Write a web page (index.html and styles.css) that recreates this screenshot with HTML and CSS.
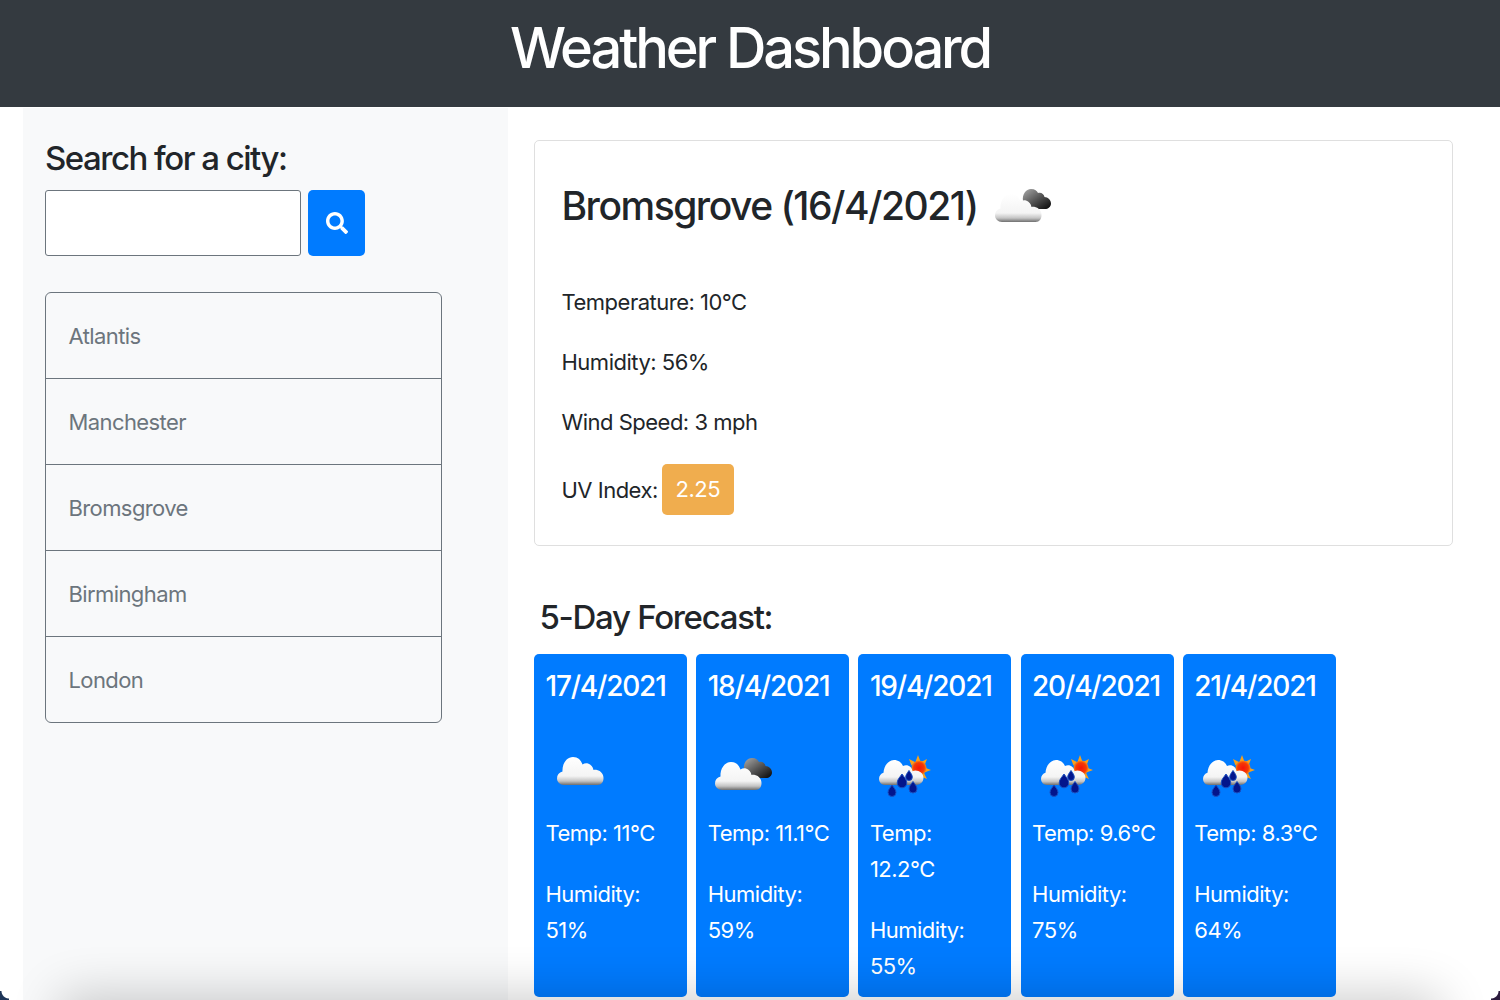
FILE: index.html
```html
<!DOCTYPE html>
<html lang="en">
<head>
    <meta charset="UTF-8">
    <meta name="viewport" content="width=device-width, initial-scale=1.0">
    <title>Weather Dashboard</title>
    <link rel="stylesheet" href="styles.css">
</head>
<body>
    <svg class="defs" width="0" height="0">
        <defs>
            <linearGradient id="white" x1="0" y1="0" x2="0" y2="1">
                <stop offset="0" stop-color="#fff"/>
                <stop offset="0.68" stop-color="#f4f4f4"/>
                <stop offset="0.86" stop-color="#c4c4c4"/>
                <stop offset="1" stop-color="#6f6f6f"/>
            </linearGradient>
            <linearGradient id="dark" x1="0" y1="0" x2="1" y2="1">
                <stop offset="0" stop-color="#aaa"/>
                <stop offset="0.5" stop-color="#555"/>
                <stop offset="1" stop-color="#050505"/>
            </linearGradient>
            <radialGradient id="sun">
                <stop offset="0" stop-color="#f4140a"/>
                <stop offset="0.7" stop-color="#f53a05"/>
                <stop offset="1" stop-color="#f98c1a"/>
            </radialGradient>
            <symbol id="cloud-white" viewBox="0 0 47 28">
                <path fill="url(#white)" d="M7 28C3 28 0 25 0 21.500 0 18 2 15.500 5.500 14.500 5 7 9.500 0 16 0c5 0 8 3 9.500 7.500 1.500-1 3.500-1.500 5.500-1 3 1 5 3.500 5.500 6.500 1-.5 2.500-.5 3.500 0 4 1 6.500 4 6.500 8 0 4-2 7-6 7z"/>
            </symbol>
            <symbol id="cloud-dark" viewBox="0 0 30 20">
                <path fill="url(#dark)" d="M2 12C1 5 5 0 10 0c4 0 6 2 7 4 3-1 6 1 6.500 4 3.500 0 6.500 3 6.500 6.500S27 20 24 20H10z"/>
            </symbol>
            <symbol id="rain-sun" viewBox="0 0 52 42">
                <g fill="#f9a11b">
                    <path d="M39 0l2.200 6h-4.400zM30 4l6 3-3.500 3.500zM48 4l-2.500 6.500-3.500-3.500zM52 15l-6 2.200v-4.400zM48 24l-6-2.500 3-3.500z"/>
                </g>
                <circle cx="40" cy="13" r="7.500" fill="url(#sun)"/>
                <path fill="url(#white)" d="M6 30c-3.300 0-6-2.700-6-6.200 0-3 2-5.300 4.500-6C5 10.500 9.500 5 15 5c4 0 7.500 2.300 9 6 1-.5 2-.7 3-.7 3.500 0 6 2.500 6.500 6 1-.5 2-.8 3-.8 4 0 8 3 8 7.300S41 30 37 30z"/>
                <g fill="#03158c" stroke="#1a4fc0" stroke-width="1">
                    <path d="M30 15.500c1.700 2.600 3.300 4.200 3.300 6.700a3.300 3.300 0 0 1-6.600 0c0-2.500 1.600-4.100 3.300-6.700z"/>
                    <path d="M23 19c2.400 3.500 4.800 5.500 4.800 9a4.800 4.800 0 0 1-9.600 0c0-3.500 2.400-5.500 4.800-9z"/>
                    <path d="M13 30c2 3 4 4.700 4 7.500a4 4 0 0 1-8 0c0-2.800 2-4.500 4-7.500z"/>
                    <path d="M34 26.500c2 3 4 4.700 4 7.500a4 4 0 0 1-8 0c0-2.800 2-4.500 4-7.500z"/>
                </g>
            </symbol>
        </defs>
    </svg>

    <header class="page-header">
        <h1>Weather Dashboard</h1>
    </header>

    <div class="page-row">
        <aside class="sidebar">
            <h4 class="search-title">Search for a city:</h4>
            <form class="search-form">
                <input type="text" class="search-input" aria-label="City">
                <button type="button" class="search-btn" aria-label="Search">
                    <svg viewBox="0 0 512 512" width="22" height="22"><path fill="#fff" d="M505 442.700 405.300 343c-4.500-4.500-10.600-7-17-7H372c27.600-35.300 44-79.700 44-128C416 93.100 322.900 0 208 0S0 93.100 0 208s93.100 208 208 208c48.300 0 92.700-16.400 128-44v16.300c0 6.400 2.500 12.500 7 17l99.700 99.700c9.400 9.400 24.600 9.400 33.900 0l28.300-28.300c9.400-9.400 9.400-24.600.1-34zM208 336c-70.700 0-128-57.200-128-128 0-70.700 57.200-128 128-128 70.700 0 128 57.200 128 128 0 70.700-57.200 128-128 128z"/></svg>
                </button>
            </form>
            <ul class="city-list">
                <li>Atlantis</li>
                <li>Manchester</li>
                <li>Bromsgrove</li>
                <li>Birmingham</li>
                <li>London</li>
            </ul>
        </aside>

        <main class="content">
            <section class="today-card">
                <h3 class="today-title">Bromsgrove (16/4/2021)
                    <svg class="wx-icon" viewBox="0 0 75 75" width="75" height="75"><use href="#cloud-dark" x="33" y="20" width="30" height="20"/><use href="#cloud-white" x="7" y="25" width="47" height="28"/></svg>
                </h3>
                <p>Temperature: 10°C</p>
                <p>Humidity: 56%</p>
                <p>Wind Speed: 3 mph</p>
                <p class="uv-row">UV Index: <span class="uv-badge">2.25</span></p>
            </section>

            <h4 class="forecast-title">5-Day Forecast:</h4>
            <div class="forecast-row">
                <div class="day-card">
                    <h5>17/4/2021</h5>
                    <div class="day-icon"><svg class="wx-icon" viewBox="0 0 75 75" width="75" height="75"><use href="#cloud-white" x="11" y="22" width="47" height="28"/></svg></div>
                    <p>Temp: 11°C</p>
                    <p>Humidity: 51%</p>
                </div>
                <div class="day-card">
                    <h5>18/4/2021</h5>
                    <div class="day-icon"><svg class="wx-icon" viewBox="0 0 75 75" width="75" height="75"><use href="#cloud-dark" x="34" y="23" width="30" height="20"/><use href="#cloud-white" x="7" y="27" width="47" height="28"/></svg></div>
                    <p>Temp: 11.1°C</p>
                    <p>Humidity: 59%</p>
                </div>
                <div class="day-card">
                    <h5>19/4/2021</h5>
                    <div class="day-icon"><svg class="wx-icon" viewBox="0 0 75 75" width="75" height="75"><use href="#rain-sun" x="9" y="20" width="52" height="42"/></svg></div>
                    <p>Temp: 12.2°C</p>
                    <p>Humidity: 55%</p>
                </div>
                <div class="day-card">
                    <h5>20/4/2021</h5>
                    <div class="day-icon"><svg class="wx-icon" viewBox="0 0 75 75" width="75" height="75"><use href="#rain-sun" x="9" y="20" width="52" height="42"/></svg></div>
                    <p>Temp: 9.6°C</p>
                    <p>Humidity: 75%</p>
                </div>
                <div class="day-card">
                    <h5>21/4/2021</h5>
                    <div class="day-icon"><svg class="wx-icon" viewBox="0 0 75 75" width="75" height="75"><use href="#rain-sun" x="9" y="20" width="52" height="42"/></svg></div>
                    <p>Temp: 8.3°C</p>
                    <p>Humidity: 64%</p>
                </div>
            </div>
        </main>
    </div>

    <div class="window-shadow"></div>
    <div class="corner corner-left"></div>
    <div class="corner corner-right"></div>
</body>
</html>
```

FILE: styles.css
```css
/* Page */
body {
    font-family: Inter, "Liberation Sans", sans-serif;
    font-size: 22px;
    line-height: 36px;
    color: #212529;
    background-color: #fff;
    margin: 0;
    height: 1000px;
    overflow: hidden;
    position: relative;
}

h1, h3, h4, h5, p, ul {
    margin: 0;
    padding: 0;
    font-weight: 500;
}

p {
    font-weight: 400;
    letter-spacing: -0.5px;
}

.defs {
    position: absolute;
}

.wx-icon {
    filter: blur(0.5px);
    flex-shrink: 0;
}

.page-header {
    height: 107px;
    background-color: #343a40;
    text-align: center;
}

.page-header h1 {
    color: #fff;
    font-size: 56px;
    line-height: 97px;
    letter-spacing: -3.1px;
}

.page-row {
    display: flex;
    padding-left: 23px;
    margin-top: 1px;
}

/* Sidebar */
.sidebar {
    width: 485px;
    height: 892px;
    box-sizing: border-box;
    padding: 28px 22px 0;
    background-color: #f8f9fa;
}

.search-title,
.forecast-title {
    font-size: 33px;
    line-height: 44px;
}

.search-title {
    letter-spacing: -1.5px;
}

.forecast-title {
    letter-spacing: -1.3px;
}

.search-form {
    display: flex;
    gap: 7px;
    margin-top: 10px;
}

.search-input {
    width: 256px;
    height: 66px;
    box-sizing: border-box;
    border: 1px solid #6c757d;
    border-radius: 3px;
    background-color: #fff;
}

.search-btn {
    width: 57px;
    height: 66px;
    border: none;
    border-radius: 5px;
    padding: 0;
    background-color: #007bff;
    display: flex;
    align-items: center;
    justify-content: center;
}

.city-list {
    list-style: none;
    width: 397px;
    box-sizing: border-box;
    margin-top: 36px;
    border: 1px solid #6c757d;
    border-radius: 6px;
}

.city-list li {
    height: 85px;
    line-height: 86px;
    padding-left: 22.5px;
    color: #6c757d;
    font-weight: 400;
    border-bottom: 1px solid #6c757d;
    letter-spacing: -0.6px;
}

.city-list li:last-child {
    border-bottom: none;
}

/* Main column */
.content {
    padding: 32px 0 0 26px;
    flex: 1;
}

.today-card {
    width: 919px;
    height: 406px;
    box-sizing: border-box;
    border: 1px solid #dfdfdf;
    border-radius: 5px;
    padding: 27px 26px 0 26.5px;
}

.today-card p {
    margin-top: 24px;
}

.today-title {
    font-size: 39px;
    line-height: 76px;
    letter-spacing: -1.5px;
    margin-bottom: 40px;
    display: flex;
    align-items: center;
    gap: 10px;
}

.today-card .uv-row {
    display: flex;
    align-items: center;
    gap: 4px;
}

.uv-badge {
    width: 72px;
    height: 51px;
    border-radius: 5px;
    background-color: #f0ad4e;
    color: #fff;
    text-align: center;
    line-height: 51px;
}

.forecast-title {
    margin-top: 49px;
    padding-left: 5.5px;
}

.forecast-row {
    display: flex;
    gap: 9.2px;
    margin-top: 15px;
}

.day-card {
    width: 153px;
    height: 343px;
    box-sizing: border-box;
    padding: 12px 11.5px 0;
    border-radius: 5px;
    background-color: #007bff;
    color: #fff;
}

.day-card h5 {
    font-size: 28px;
    line-height: 40px;
    letter-spacing: -1.2px;
}

.day-card p {
    margin-bottom: 25px;
}

.day-icon {
    height: 75px;
    margin: 29px 0 5px;
}

/* Shadow of the window below the screenshot */
.window-shadow {
    position: absolute;
    left: 80px;
    right: 80px;
    top: 1015px;
    height: 30px;
    box-shadow: 0 0 50px 20px rgba(0, 0, 0, 0.2);
    pointer-events: none;
}

.corner {
    position: absolute;
    bottom: 0;
    width: 9px;
    height: 9px;
}

.corner-left {
    left: 0;
    background: radial-gradient(circle at top right, transparent 7px, #1d3557 8px);
}

.corner-right {
    right: 0;
    background: radial-gradient(circle at top left, transparent 7px, #2b1a3d 8px);
}
```
